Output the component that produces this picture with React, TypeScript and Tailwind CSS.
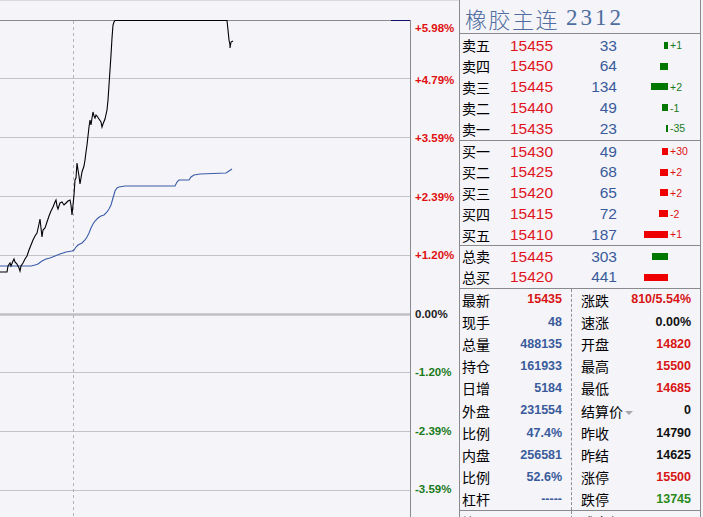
import React from 'react'

const priceLine =
  '0,272 7,272 8,266 10,263 11,266 13,261 14,259 15,262 17,264 19,268 20,271 21,266 23,263 25,259 27,256 29,250 31,245 33,240 35,236 37,233 39,224 40,219 41,228 42,237 43,230 45,228 47,222 49,216 51,211 53,207 55,202 56,200 57,206 58,209 60,203 62,202 64,205 66,203 68,201 70,200 71,205 72,215 73,205 74,195 75,180 76,178 77,163 78,170 79,176 80,184 81,178 82,172 84,166 85,160 86,152 87,145 88,136 89,127 90,120 91,125 92,118 93,112 94,116 95,118 96,115 97,116 99,119 101,122 102,127 103,124 105,119 107,110 108,100 109,85 110,70 111,55 112,38 113,25 114,22 115,20.5 227,20.5 228,30 229,40 230,45 230,48 231,42 233,41'

const avgLine =
  '0,266 31,266 35,265 38,264 42,261 46,259 50,258 55,256 60,254 66,252 72,251 74,250 76,247 78,245 82,243 85,240 87,237 89,233 91,228 93,224 95,221 98,218 101,216 104,215 107,212 109,209 111,205 113,198 115,191 117,188 119,187 125,186 175,186 177,182 179,180 189,180 191,177 194,175 200,174 226,173 229,171 232,169'

const axis = [
  { t: '+5.98%', c: 'text-[#e01010]' },
  { t: '+4.79%', c: 'text-[#e01010]' },
  { t: '+3.59%', c: 'text-[#e01010]' },
  { t: '+2.39%', c: 'text-[#e01010]' },
  { t: '+1.20%', c: 'text-[#e01010]' },
  { t: '0.00%', c: 'text-[#222]' },
  { t: '-1.20%', c: 'text-[#1a7a1a]' },
  { t: '-2.39%', c: 'text-[#1a7a1a]' },
  { t: '-3.59%', c: 'text-[#1a7a1a]' },
]

const sells = [
  { l: '卖五', p: '15455', v: '33', w: 4, d: '+1' },
  { l: '卖四', p: '15450', v: '64', w: 8, d: '' },
  { l: '卖三', p: '15445', v: '134', w: 17, d: '+2' },
  { l: '卖二', p: '15440', v: '49', w: 6, d: '-1' },
  { l: '卖一', p: '15435', v: '23', w: 2, d: '-35' },
]

const buys = [
  { l: '买一', p: '15430', v: '49', w: 6, d: '+30' },
  { l: '买二', p: '15425', v: '68', w: 8, d: '+2' },
  { l: '买三', p: '15420', v: '65', w: 8, d: '+2' },
  { l: '买四', p: '15415', v: '72', w: 9, d: '-2' },
  { l: '买五', p: '15410', v: '187', w: 24, d: '+1' },
]

const totals = [
  { l: '总卖', p: '15445', v: '303', w: 16, d: '', green: true },
  { l: '总买', p: '15420', v: '441', w: 24, d: '', green: false },
]

const blue = 'text-[#3a5b9b]'
const red = 'text-[#d81414]'
const black = 'text-[#111]'
const green = 'text-[#2a8a1a]'

const leftStats = [
  { l: '最新', v: '15435', c: red },
  { l: '现手', v: '48', c: blue },
  { l: '总量', v: '488135', c: blue },
  { l: '持仓', v: '161933', c: blue },
  { l: '日增', v: '5184', c: blue },
  { l: '外盘', v: '231554', c: blue },
  { l: '比例', v: '47.4%', c: blue },
  { l: '内盘', v: '256581', c: blue },
  { l: '比例', v: '52.6%', c: blue },
  { l: '杠杆', v: '-----', c: blue },
]

const rightStats = [
  { l: '涨跌', v: '810/5.54%', c: red },
  { l: '速涨', v: '0.00%', c: black },
  { l: '开盘', v: '14820', c: red },
  { l: '最高', v: '15500', c: red },
  { l: '最低', v: '14685', c: red },
  { l: '结算价', v: '0', c: black, arrow: true },
  { l: '昨收', v: '14790', c: black },
  { l: '昨结', v: '14625', c: black },
  { l: '涨停', v: '15500', c: red },
  { l: '跌停', v: '13745', c: green },
]

const cjk = "font-['Noto_Sans_CJK_SC',sans-serif]"

function BookRow({ l, p, v, w, d, isSell }: { l: string; p: string; v: string; w: number; d: string; isSell: boolean }) {
  return (
    <div className="flex h-[20.8px] items-center pl-[2px]">
      <span className={`w-[48px] text-[14px] leading-none text-black ${cjk}`}>{l}</span>
      <span className="w-[60px] text-[15.5px] leading-none text-[#e0141e]">{p}</span>
      <span className={`w-[47px] text-right text-[15.5px] leading-none ${blue}`}>{v}</span>
      <span className="flex w-[51px] justify-end">
        <span className={`h-[7px] ${isSell ? 'bg-[#007800]' : 'bg-[#ee0000]'}`} style={{ width: w }} />
      </span>
      <span className={`pl-[2px] text-[10.5px] leading-none ${isSell ? 'text-[#1a7a1a]' : 'text-[#e01010]'}`}>{d}</span>
    </div>
  )
}

export default function App() {
  return (
    <div className="flex h-[517px] w-[703px] overflow-hidden bg-[#f4f4f9] font-['Liberation_Sans',sans-serif]">
      {/* chart */}
      <div className="w-[410px] shrink-0">
        <svg width="411" height="517" className="block">
          <line x1="0" y1="0.5" x2="411" y2="0.5" stroke="#dadade" />
          {[78, 137, 196, 255, 372, 431, 490].map((y) => (
            <line key={y} x1="0" y1={y + 0.5} x2="410" y2={y + 0.5} stroke="#c4c4c8" />
          ))}
          <line x1="0" y1="314.5" x2="411" y2="314.5" stroke="#c0c0c4" strokeWidth="2.5" />
          <line x1="73.5" y1="21" x2="73.5" y2="517" stroke="#b4b4b8" strokeDasharray="3 3" />
          <line x1="0" y1="20.5" x2="410" y2="20.5" stroke="#8a8a8e" />
          <line x1="391" y1="20.5" x2="410" y2="20.5" stroke="#101070" />
          <line x1="410.5" y1="20" x2="410.5" y2="517" stroke="#8a8a8e" />
          <polyline points={avgLine} fill="none" stroke="#3b5ca8" strokeWidth="1.1" />
          <polyline points={priceLine} fill="none" stroke="#000" strokeWidth="1.1" />
        </svg>
      </div>

      {/* axis labels */}
      <div className="flex w-[49px] shrink-0 flex-col border-t border-[#dadade]">
        {axis.map((a, i) => (
          <div
            key={a.t}
            className={`flex items-center pl-[5px] text-[11.5px] font-bold leading-none ${a.c} ${
              i === 0 ? 'h-[48px] pt-[7px]' : 'h-[58.9px] pt-[5px]'
            }`}
          >
            {a.t}
          </div>
        ))}
      </div>

      {/* quote panel */}
      <div className="flex w-[242px] shrink-0 flex-col border-x border-[#8a8a8e]">
        <div className="flex h-[33px] shrink-0 items-center pl-[5px] pt-[2px] text-[#4f6d9e]">
          <span className={`text-[22px] font-light leading-none tracking-[1.5px] ${cjk}`}>橡胶主连</span>
          <span className="ml-[7px] font-['Liberation_Serif',serif] text-[23px] leading-none tracking-[3px]">2312</span>
        </div>

        <div className="shrink-0 border-t border-[#8a8a8e] py-[1px]">
          {sells.map((r) => (
            <BookRow key={r.l} {...r} isSell />
          ))}
        </div>
        <div className="shrink-0 border-t border-[#8a8a8e]">
          {buys.map((r) => (
            <BookRow key={r.l} {...r} isSell={false} />
          ))}
        </div>
        <div className="shrink-0 border-t border-[#8a8a8e]">
          {totals.map((r) => (
            <BookRow key={r.l} {...r} isSell={r.green} />
          ))}
        </div>

        <div className="flex shrink-0 border-t border-[#8a8a8e]">
          <div className="w-[112px] border-r border-dashed border-[#909094]">
            {leftStats.map((s, i) => (
              <div key={i} className="flex h-[22.2px] items-center justify-between pl-[2px] pr-[9px]">
                <span className={`text-[14px] leading-none text-black ${cjk}`}>{s.l}</span>
                <span className={`text-[12.5px] font-bold leading-none ${s.c}`}>{s.v}</span>
              </div>
            ))}
          </div>
          <div className="flex-1">
            {rightStats.map((s, i) => (
              <div key={i} className="flex h-[22.2px] items-center justify-between pl-[9px] pr-[9px]">
                <span className="flex items-center">
                  <span className={`text-[14px] leading-none text-black ${cjk}`}>{s.l}</span>
                  {s.arrow && (
                    <span className="ml-[2px] mt-[5px] h-0 w-0 border-x-[4px] border-t-[4px] border-x-transparent border-t-[#a8a8ac]" />
                  )}
                </span>
                <span className={`text-[12.5px] font-bold leading-none ${s.c}`}>{s.v}</span>
              </div>
            ))}
          </div>
        </div>

        <div className="flex shrink-0 border-t border-[#8a8a8e]">
          <div className="flex h-[22px] w-[112px] items-center justify-between border-r border-dashed border-[#909094] pl-[2px] pr-[9px]">
            <span className={`text-[14px] leading-none text-black ${cjk}`}>均价</span>
            <span className={`text-[12.5px] font-bold leading-none ${blue}`}>15228</span>
          </div>
          <div className="flex h-[22px] flex-1 items-center justify-between pl-[9px] pr-[9px]">
            <span className={`text-[14px] leading-none text-black ${cjk}`}>成交额</span>
            <span className={`text-[14px] leading-none text-black ${cjk}`}>万元</span>
          </div>
        </div>
      </div>
    </div>
  )
}
